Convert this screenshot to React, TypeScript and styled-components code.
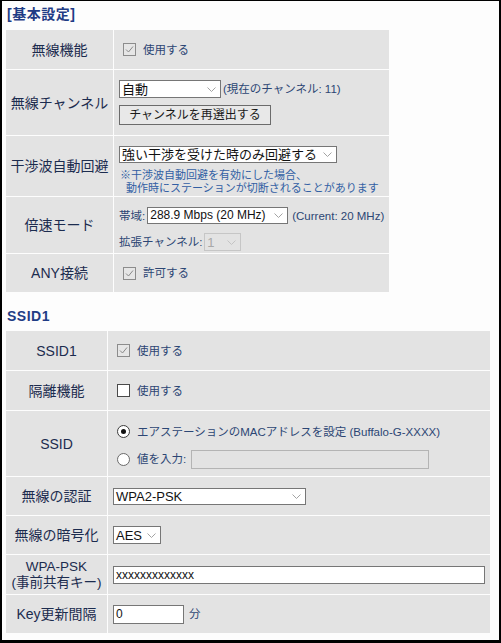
import React from "react";
import styled, { createGlobalStyle } from "styled-components";

const Global = createGlobalStyle`
  html, body { margin: 0; padding: 0; background: #fff; }
  body { font-family: "Liberation Sans", "Noto Sans CJK JP", sans-serif; }
`;

const Frame = styled.div`
  width: 501px;
  height: 643px;
  box-sizing: border-box;
  border-style: solid;
  border-color: #000;
  border-width: 1px 2px 3px 2px;
  background: #fdfdfd;
  padding-left: 4px;
`;

const SectionTitle = styled.h2<{ $h: number; $pt: number; $pb: number }>`
  margin: 0;
  height: ${(p) => p.$h}px;
  box-sizing: border-box;
  padding: ${(p) => p.$pt}px 0 ${(p) => p.$pb}px 1px;
  display: flex;
  align-items: center;
  font-size: 14px;
  font-weight: bold;
  letter-spacing: 0.5px;
  line-height: 16px;
  color: #1f3c85;
`;

const Grid = styled.div<{ $cols: string; $rows: string }>`
  display: grid;
  grid-template-columns: ${(p) => p.$cols};
  grid-template-rows: ${(p) => p.$rows};
  gap: 1px;
  width: max-content;
`;

const Label = styled.div<{ $lh?: number; $fs?: number }>`
  background: #e3e3e3;
  display: flex;
  flex-direction: column;
  align-items: center;
  justify-content: center;
  text-align: center;
  font-size: ${(p) => p.$fs ?? 14}px;
  line-height: ${(p) => p.$lh ?? 16}px;
  color: #1c2c4f;
  white-space: nowrap;
`;

const Value = styled.div<{ $pt?: number; $gap?: number; $top?: boolean }>`
  background: #e3e3e3;
  display: flex;
  flex-direction: column;
  justify-content: ${(p) => (p.$top ? "flex-start" : "center")};
  align-items: flex-start;
  box-sizing: border-box;
  padding: ${(p) => p.$pt ?? 0}px 0 0 5px;
  gap: ${(p) => p.$gap ?? 0}px;
`;

const Line = styled.div<{ $gap?: number }>`
  display: flex;
  align-items: center;
  gap: ${(p) => p.$gap ?? 2}px;
`;

const Text = styled.span<{ $ml?: number }>`
  font-size: 11.5px;
  line-height: 16px;
  color: #2c4674;
  white-space: nowrap;
  margin-left: ${(p) => p.$ml ?? 0}px;
`;

const Option = styled.label`
  display: flex;
  align-items: center;
  gap: 7px;
  margin-left: 4px;
`;

const Box = styled.span<{ $checked?: boolean }>`
  width: 13px;
  height: 13px;
  box-sizing: border-box;
  border: 1px solid ${(p) => (p.$checked ? "#8c8c8c" : "#4a4a4a")};
  background: ${(p) => (p.$checked ? "#e6e6e6" : "#fff")};
  display: flex;
  align-items: center;
  justify-content: center;
`;

const Round = styled.span<{ $checked?: boolean }>`
  width: 13px;
  height: 13px;
  box-sizing: border-box;
  border-radius: 50%;
  border: 1px solid ${(p) => (p.$checked ? "#3c3c3c" : "#6a6a6a")};
  background: #fff;
  display: flex;
  align-items: center;
  justify-content: center;
`;

const Dot = styled.span`
  width: 5px;
  height: 5px;
  border-radius: 50%;
  background: #111;
`;

const SelectBox = styled.span<{ $w: number; $h: number; $fs?: number; $disabled?: boolean }>`
  display: inline-flex;
  align-items: center;
  justify-content: space-between;
  width: ${(p) => p.$w}px;
  height: ${(p) => p.$h}px;
  box-sizing: border-box;
  border: 1px solid ${(p) => (p.$disabled ? "#c6c6c6" : "#767676")};
  background: ${(p) => (p.$disabled ? "transparent" : "#fff")};
  padding: 0 4px 0 2px;
  font-size: ${(p) => p.$fs ?? 13}px;
  line-height: 15px;
  color: ${(p) => (p.$disabled ? "#a8a8a8" : "#111")};
  white-space: nowrap;
  overflow: hidden;
`;

const Field = styled.span<{ $w: number; $h: number; $disabled?: boolean }>`
  display: inline-flex;
  align-items: center;
  width: ${(p) => p.$w}px;
  height: ${(p) => p.$h}px;
  box-sizing: border-box;
  border: 1px solid ${(p) => (p.$disabled ? "#b4b4b4" : "#767676")};
  background: ${(p) => (p.$disabled ? "transparent" : "#fff")};
  padding: 0 2px;
  font-size: 12px;
  line-height: 14px;
  color: #111;
  white-space: nowrap;
`;

const Button = styled.button`
  width: 152px;
  height: 20px;
  box-sizing: border-box;
  border: 1px solid #6b6b6b;
  background: #e8e8e8;
  padding: 0;
  font-family: inherit;
  font-size: 12px;
  line-height: 16px;
  color: #1a1a1a;
`;

const Note = styled.div`
  margin-top: 6px;
  margin-left: 1px;
  font-size: 11px;
  line-height: 12.5px;
  color: #325fa3;
  white-space: nowrap;
`;

const NoteLine = styled.div<{ $indent?: number }>`
  padding-left: ${(p) => p.$indent ?? 0}px;
`;

const Chevron = ({ disabled }: { disabled?: boolean }) => (
  <svg width="9" height="5" viewBox="0 0 9 5">
    <polyline
      points="0.5,0.5 4.5,4.5 8.5,0.5"
      fill="none"
      stroke={disabled ? "#c4c4c4" : "#a3a3a3"}
      strokeWidth="1"
    />
  </svg>
);

const Select = ({
  w,
  h,
  fs,
  disabled,
  children,
}: {
  w: number;
  h: number;
  fs?: number;
  disabled?: boolean;
  children: React.ReactNode;
}) => (
  <SelectBox $w={w} $h={h} $fs={fs} $disabled={disabled}>
    <span>{children}</span>
    <Chevron disabled={disabled} />
  </SelectBox>
);

const Check = ({ checked, children }: { checked?: boolean; children: React.ReactNode }) => (
  <Option>
    <Box $checked={checked}>
      {checked && (
        <svg width="11" height="11" viewBox="0 0 11 11">
          <polyline points="2,5.5 4.5,8 9,2.5" fill="none" stroke="#8a8a8a" strokeWidth="1" />
        </svg>
      )}
    </Box>
    <Text>{children}</Text>
  </Option>
);

const Radio = ({ checked, children }: { checked?: boolean; children: React.ReactNode }) => (
  <Option>
    <Round $checked={checked}>{checked && <Dot />}</Round>
    {children}
  </Option>
);

export default function App() {
  return (
    <>
      <Global />
      <Frame>
        <SectionTitle $h={29} $pt={0} $pb={4}>
          [基本設定]
        </SectionTitle>
        <Grid $cols="107px 275px" $rows="39px 65px 60px 56px 38px">
          <Label>無線機能</Label>
          <Value>
            <Check checked>使用する</Check>
          </Value>

          <Label>無線チャンネル</Label>
          <Value $gap={7}>
            <Line>
              <Select w={102} h={18}>
                自動
              </Select>
              <Text>(現在のチャンネル: 11)</Text>
            </Line>
            <Button>チャンネルを再選出する</Button>
          </Value>

          <Label>干渉波自動回避</Label>
          <Value $top $pt={10}>
            <Select w={218} h={17}>
              強い干渉を受けた時のみ回避する
            </Select>
            <Note>
              <NoteLine>※干渉波自動回避を有効にした場合、</NoteLine>
              <NoteLine $indent={6}>動作時にステーションが切断されることがあります</NoteLine>
            </Note>
          </Value>

          <Label>倍速モード</Label>
          <Value $pt={8} $gap={9}>
            <Line>
              <Text>帯域:</Text>
              <Select w={141} h={17} fs={12}>
                288.9 Mbps (20 MHz)
              </Select>
              <Text $ml={2}>(Current: 20 MHz)</Text>
            </Line>
            <Line>
              <Text>拡張チャンネル:</Text>
              <Select w={37} h={18} disabled>
                1
              </Select>
            </Line>
          </Value>

          <Label>ANY接続</Label>
          <Value>
            <Check checked>許可する</Check>
          </Value>
        </Grid>

        <SectionTitle $h={39} $pt={8} $pb={0}>
          SSID1
        </SectionTitle>
        <Grid $cols="101px 382px" $rows="39px 39px 65px 38px 38px 39px 38px">
          <Label>SSID1</Label>
          <Value>
            <Check checked>使用する</Check>
          </Value>

          <Label>隔離機能</Label>
          <Value>
            <Check>使用する</Check>
          </Value>

          <Label>SSID</Label>
          <Value $pt={5} $gap={10}>
            <Radio checked>
              <Text>エアステーションのMACアドレスを設定 (Buffalo-G-XXXX)</Text>
            </Radio>
            <Radio>
              <Line $gap={5}>
                <Text>値を入力:</Text>
                <Field $w={238} $h={19} $disabled />
              </Line>
            </Radio>
          </Value>

          <Label>無線の認証</Label>
          <Value>
            <Select w={193} h={17}>
              WPA2-PSK
            </Select>
          </Value>

          <Label>無線の暗号化</Label>
          <Value>
            <Select w={48} h={18}>
              AES
            </Select>
          </Value>

          <Label $lh={16} $fs={13.5}>
            <span>WPA-PSK</span>
            <span>(事前共有キー)</span>
          </Label>
          <Value>
            <Field $w={372} $h={18}>
              xxxxxxxxxxxxx
            </Field>
          </Value>

          <Label>Key更新間隔</Label>
          <Value>
            <Line $gap={5}>
              <Field $w={71} $h={19}>
                0
              </Field>
              <Text>分</Text>
            </Line>
          </Value>
        </Grid>
      </Frame>
    </>
  );
}
